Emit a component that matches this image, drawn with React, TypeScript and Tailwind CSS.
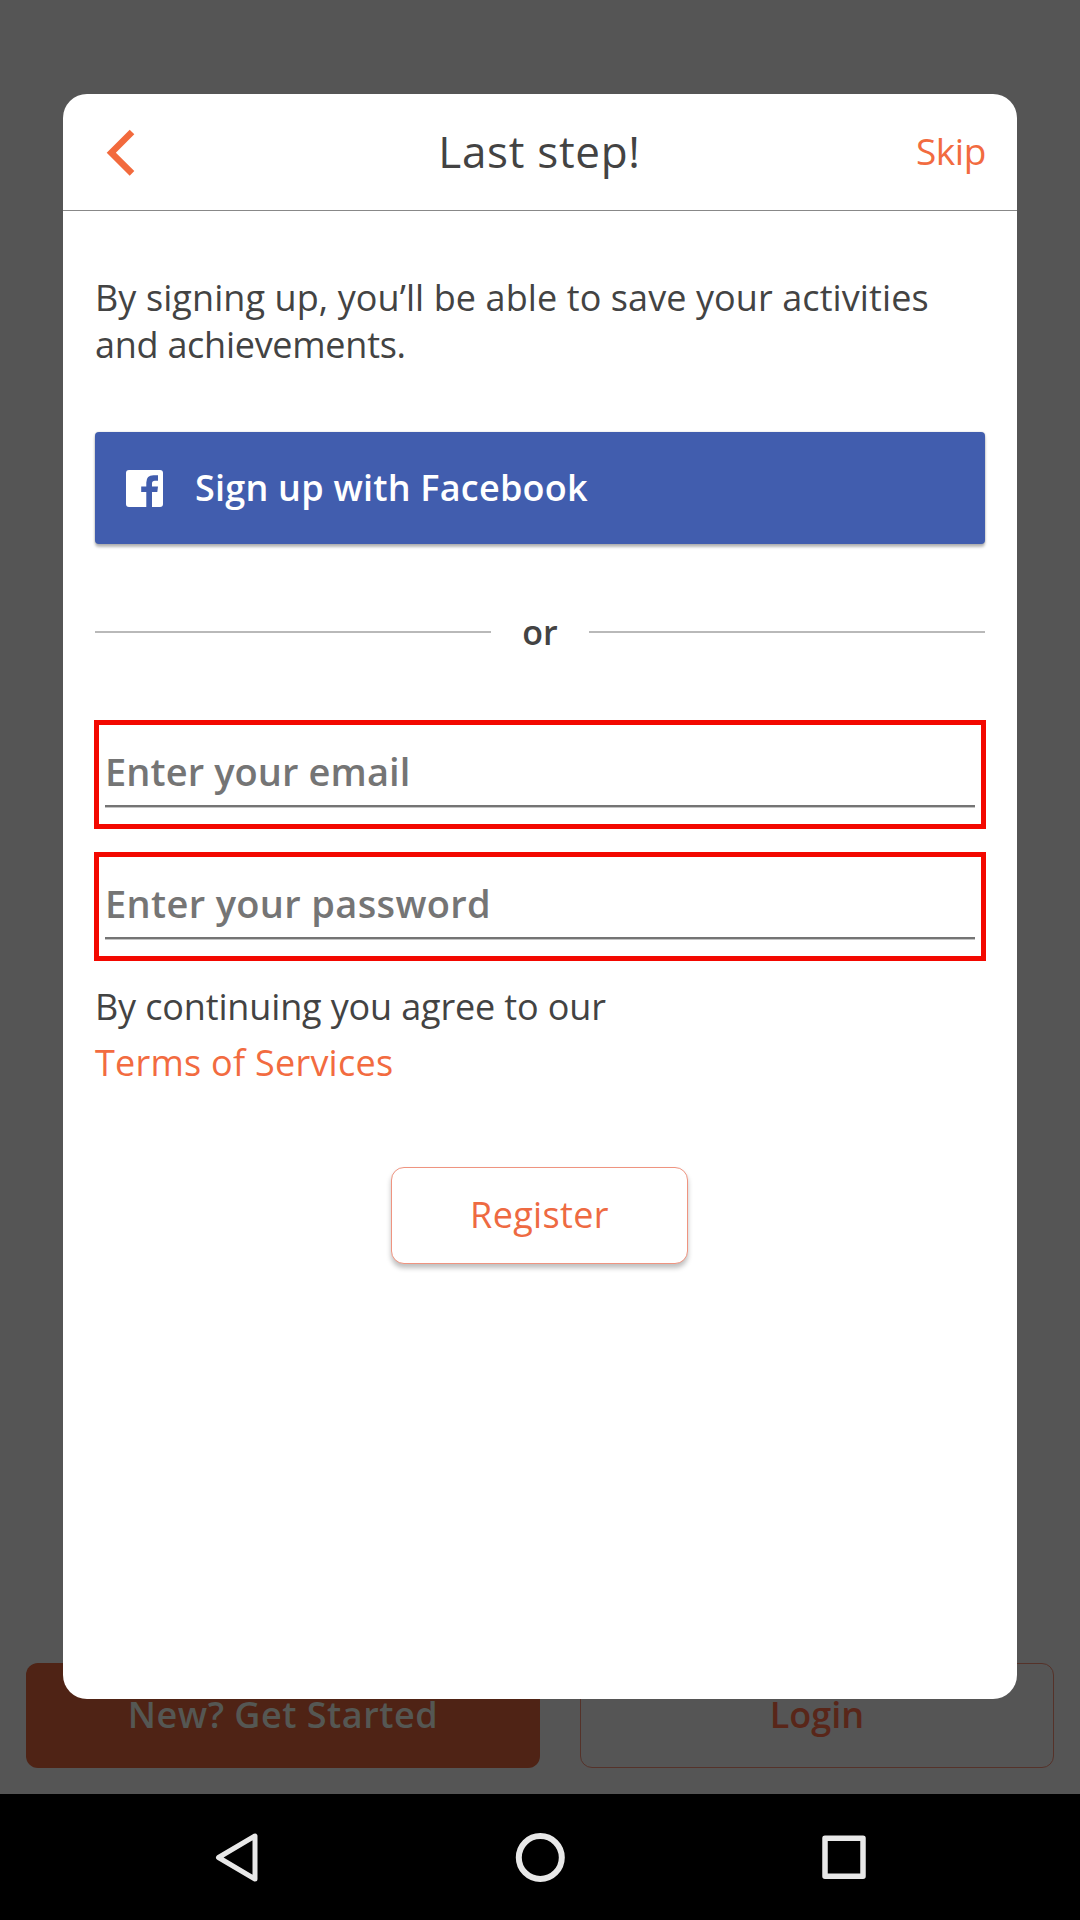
import type { ReactNode } from 'react';

function Field({ label, tracking }: { label: string; tracking: string }) {
  return (
    <div className="h-[109px] border-[5px] border-[#f30800] px-[6px] pt-[20px]">
      <div
        className={`h-[62px] border-b-2 border-[#747474] text-[38px] font-semibold leading-[53px] text-[#757575] shadow-[0_1px_0_#c4c4c4] ${tracking}`}
      >
        {label}
      </div>
    </div>
  );
}

function Backdrop() {
  return (
    <div className="flex h-full flex-col">
      <div className="flex flex-1 items-end gap-10 bg-[#555555] px-[26px] pb-[26px]">
        <div className="flex h-[105px] w-[514px] items-center justify-center rounded-[12px] bg-[#4f2315] pb-px text-[36px] font-semibold tracking-[0.5px] text-[#555753]">
          New? Get Started
        </div>
        <div className="flex h-[105px] flex-1 items-center justify-center rounded-[12px] border border-[#553229] pb-px text-[36px] font-semibold text-[#592619]">
          Login
        </div>
      </div>
      <nav className="flex h-[126px] items-center bg-black text-[#e8e8e8]">
        <svg className="ml-[212px] h-[52px] w-[52px]" viewBox="0 0 52 52" fill="none" stroke="currentColor" strokeWidth="5" strokeLinejoin="round">
          <path d="M43 5V48L6.5 26.5Z" />
        </svg>
        <svg className="ml-[250px] h-[52px] w-[52px]" viewBox="0 0 52 52" fill="none" stroke="currentColor" strokeWidth="6">
          <circle cx="26.3" cy="26.5" r="21.5" />
        </svg>
        <svg className="ml-[252px] h-[52px] w-[52px]" viewBox="0 0 52 52" fill="none" stroke="currentColor" strokeWidth="5.5" strokeLinejoin="round">
          <rect x="7" y="7.3" width="38" height="38" />
        </svg>
      </nav>
    </div>
  );
}

function Header() {
  return (
    <header className="grid h-[117px] grid-cols-3 items-center border-b border-[#888888] pl-[41px] pr-[31px]">
      <svg className="h-[48px] w-[34px]" viewBox="0 0 34 48" fill="none" stroke="#f26a3d" strokeWidth="6.5">
        <path d="M28 4L7.3 24.7L28 45.4" />
      </svg>
      <h1 className="whitespace-nowrap pb-[2px] pr-[11px] text-center text-[44px] leading-[60px] tracking-[0.7px]">Last step!</h1>
      <span className="pb-[2px] text-right text-[37px] leading-[50px] tracking-[-0.4px] text-[#f26b40]">Skip</span>
    </header>
  );
}

function Divider({ children }: { children: ReactNode }) {
  return (
    <div className="mt-[68px] flex h-10 items-center">
      <div className="h-[2px] flex-1 bg-[#b9b9b9]" />
      <div className="w-[98px] text-center text-[34px] font-semibold leading-10">{children}</div>
      <div className="h-[2px] flex-1 bg-[#b9b9b9]" />
    </div>
  );
}

export default function App() {
  return (
    <div className="relative h-[1920px] w-[1080px] overflow-hidden font-['Open_Sans',sans-serif]">
      <Backdrop />
      <main className="absolute left-[63px] top-[94px] h-[1605px] w-[954px] rounded-[24px] bg-white text-[#434343]">
        <Header />
        <div className="flex flex-col px-[32px] pt-[63px]">
          <p className="whitespace-nowrap text-[36px] leading-[47px]">
            <span className="tracking-[0.09px]">By signing up, you’ll be able to save your activities</span>
            <br />
            <span className="tracking-[-0.27px]">and achievements.</span>
          </p>
          <button className="mt-[64px] flex h-[112px] items-center rounded-[4px] bg-[#415dae] pl-[31px] text-white shadow-[0_3px_3px_rgba(0,0,0,0.28),0_0_2px_rgba(0,0,0,0.2)]">
            <svg className="h-[37px] w-[37px]" viewBox="0 0 37 37">
              <rect width="37" height="37" rx="3" fill="currentColor" />
              <path
                d="M20.3 37V22H15.2V16.6H20.3V12.6Q20.3 5.2 27.5 5.2H32V10.8H28.8Q26 10.8 26 13.4V16.6H32L31.3 22H26V37Z"
                fill="#415dae"
              />
            </svg>
            <span className="ml-[32px] text-[36px] font-semibold tracking-[0.22px]">Sign up with Facebook</span>
          </button>
          <Divider>or</Divider>
          <div className="-mx-px mt-[68px] flex flex-col gap-[23px]">
            <Field label="Enter your email" tracking="tracking-[0.1px]" />
            <Field label="Enter your password" tracking="tracking-[0.35px]" />
          </div>
          <div className="mt-[18px] text-[36px] leading-[56px]">
            <div className="tracking-[-0.15px]">By continuing you agree to our</div>
            <div className="tracking-[0.25px] text-[#f26b40]">Terms of Services</div>
          </div>
          <button className="mr-px mt-[76px] flex h-[97px] w-[297px] items-center justify-center self-center rounded-[13px] border border-[#ef9480] bg-white pb-[2px] text-[36px] tracking-[0.35px] text-[#ee6a42] shadow-[0_4px_5px_rgba(0,0,0,0.25)]">
            Register
          </button>
        </div>
      </main>
    </div>
  );
}
